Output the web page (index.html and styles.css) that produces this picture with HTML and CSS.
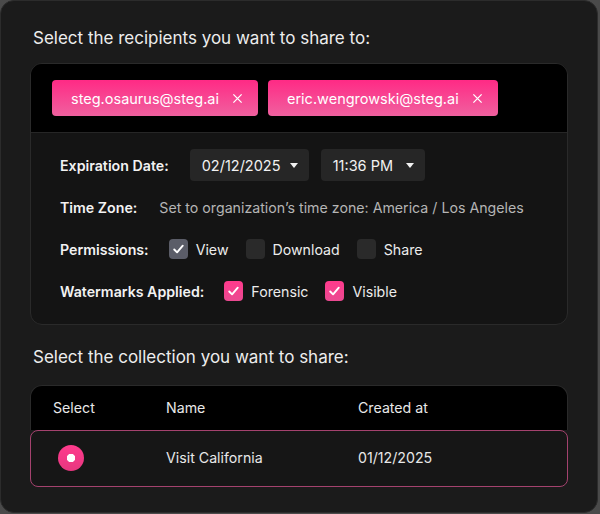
FILE: index.html
```html
<!DOCTYPE html>
<html>
<head>
<meta charset="utf-8">
<link rel="stylesheet" href="styles.css">
</head>
<body>
<div class="panel">
  <h2 class="heading">Select the recipients you want to share to:</h2>
  <div class="card">
    <div class="chips">
      <span class="chip">steg.osaurus@steg.ai<svg class="x" viewBox="0 0 12 12"><path d="M1.5 1.5L10.5 10.5M10.5 1.5L1.5 10.5"/></svg></span>
      <span class="chip">eric.wengrowski@steg.ai<svg class="x" viewBox="0 0 12 12"><path d="M1.5 1.5L10.5 10.5M10.5 1.5L1.5 10.5"/></svg></span>
    </div>
    <div class="settings">
      <div class="row">
        <span class="label">Expiration Date:</span>
        <div class="selects">
          <span class="select date">02/12/2025<svg class="caret" viewBox="0 0 8 5"><path d="M0 0H8L4 5Z"/></svg></span>
          <span class="select time">11:36 PM<svg class="caret" viewBox="0 0 8 5"><path d="M0 0H8L4 5Z"/></svg></span>
        </div>
      </div>
      <div class="row">
        <span class="label">Time Zone:</span>
        <span class="muted">Set to organization’s time zone: America / Los Angeles</span>
      </div>
      <div class="row">
        <span class="label">Permissions:</span>
        <div class="checks">
          <span class="check"><span class="box gray"><svg viewBox="0 0 20 20"><path d="M5.5 10.5L8.5 13.5L14.5 6.5"/></svg></span>View</span>
          <span class="check"><span class="box"></span>Download</span>
          <span class="check"><span class="box"></span>Share</span>
        </div>
      </div>
      <div class="row">
        <span class="label">Watermarks Applied:</span>
        <div class="checks">
          <span class="check"><span class="box pink"><svg viewBox="0 0 20 20"><path d="M5.5 10.5L8.5 13.5L14.5 6.5"/></svg></span>Forensic</span>
          <span class="check"><span class="box pink"><svg viewBox="0 0 20 20"><path d="M5.5 10.5L8.5 13.5L14.5 6.5"/></svg></span>Visible</span>
        </div>
      </div>
    </div>
  </div>
  <h2 class="heading second">Select the collection you want to share:</h2>
  <div class="table">
    <div class="thead">
      <span>Select</span>
      <span>Name</span>
      <span>Created at</span>
    </div>
    <div class="trow">
      <span class="radio-cell"><span class="radio"></span></span>
      <span>Visit California</span>
      <span>01/12/2025</span>
    </div>
  </div>
</div>
</body>
</html>
```

FILE: styles.css
```css
* { box-sizing: border-box; }
html, body { margin: 0; padding: 0; }
body {
  background: #4a4a4a;
  width: 600px;
  height: 514px;
  font-family: "Inter", "Noto Sans", sans-serif;
  color: #ececec;
}
.panel {
  width: 598px;
  height: 513px;
  background: #1b1b1b;
  border: 1px solid #2c2c2c;
  border-radius: 14px;
  padding: 25px 29px 0 29px;
}
.heading {
  margin: 0 0 13px 3px;
  font-size: 17px;
  font-weight: 400;
  line-height: 24px;
  color: #ededed;
  letter-spacing: 0;
}
.heading.second {
  margin-top: 20px;
  margin-bottom: 16px;
}
.card {
  border: 1px solid #2a2a2a;
  border-radius: 12px;
  overflow: hidden;
  background: #141414;
}
.chips {
  background: #000;
  padding: 16px 21px;
  display: flex;
  gap: 10px;
  border-bottom: 1px solid #262626;
}
.chip {
  display: flex;
  align-items: center;
  height: 36px;
  padding: 0 15px 0 19px;
  gap: 13px;
  border-radius: 4px;
  background: linear-gradient(180deg, #ff2a85 0%, #f0619f 100%);
  color: #fff;
  font-size: 14.5px;
}
.x {
  width: 11px;
  height: 11px;
  fill: none;
  stroke: #fff;
  stroke-width: 1.4;
}
.settings {
  padding: 11px 29px 12px 29px;
}
.row {
  display: flex;
  align-items: center;
  gap: 20px;
  height: 42px;
  white-space: nowrap;
}
.label {
  font-size: 14.2px;
  font-weight: 600;
  color: #f2f2f2;
}
.selects {
  display: flex;
  gap: 12px;
  margin-left: 1px;
}
.select {
  display: flex;
  align-items: center;
  justify-content: space-between;
  height: 32px;
  padding: 0 11px 0 12px;
  background: #262626;
  border-radius: 4px;
  font-size: 14.5px;
  color: #f2f2f2;
}
.select.date { width: 119px; }
.select.time { width: 104px; }
.caret {
  width: 8px;
  height: 5px;
  fill: #f2f2f2;
}
.muted {
  font-size: 14.2px;
  color: #b5b5b5;
  margin-left: 2px;
}
.checks {
  display: flex;
  gap: 17px;
}
.check {
  display: flex;
  align-items: center;
  gap: 8px;
  font-size: 14.2px;
  color: #ececec;
}
.box {
  width: 19px;
  height: 20px;
  border-radius: 4px;
  background: #2a2a2a;
  display: flex;
  align-items: center;
  justify-content: center;
}
.box svg {
  width: 19px;
  height: 20px;
  fill: none;
  stroke: #fff;
  stroke-width: 2;
  stroke-linecap: round;
  stroke-linejoin: round;
}
.box.gray { background: #5b5d68; }
.box.pink { background: linear-gradient(180deg, #ff3a8c 0%, #ea4a91 100%); }
.table {
  width: 538px;
}
.thead, .trow {
  display: grid;
  grid-template-columns: 113px 192px 1fr;
  align-items: center;
  font-size: 14.2px;
  color: #e8e8e8;
  padding-left: 22px;
}
.thead {
  height: 45px;
  padding-bottom: 1px;
  background: #000;
  border: 1px solid #2a2a2a;
  border-bottom: none;
  border-radius: 12px 12px 0 0;
}
.trow {
  height: 57px;
  padding-bottom: 2px;
  background: #161616;
  border: 1px solid #a4426e;
  border-radius: 8px;
}
.radio-cell {
  display: flex;
  align-items: center;
  padding-left: 5px;
}
.radio {
  width: 26px;
  height: 26px;
  border-radius: 50%;
  background: radial-gradient(circle at 50% 50%, #fff 0 4px, transparent 4.5px), linear-gradient(180deg, #ff3b8d 0%, #e7377f 100%);
}
```
